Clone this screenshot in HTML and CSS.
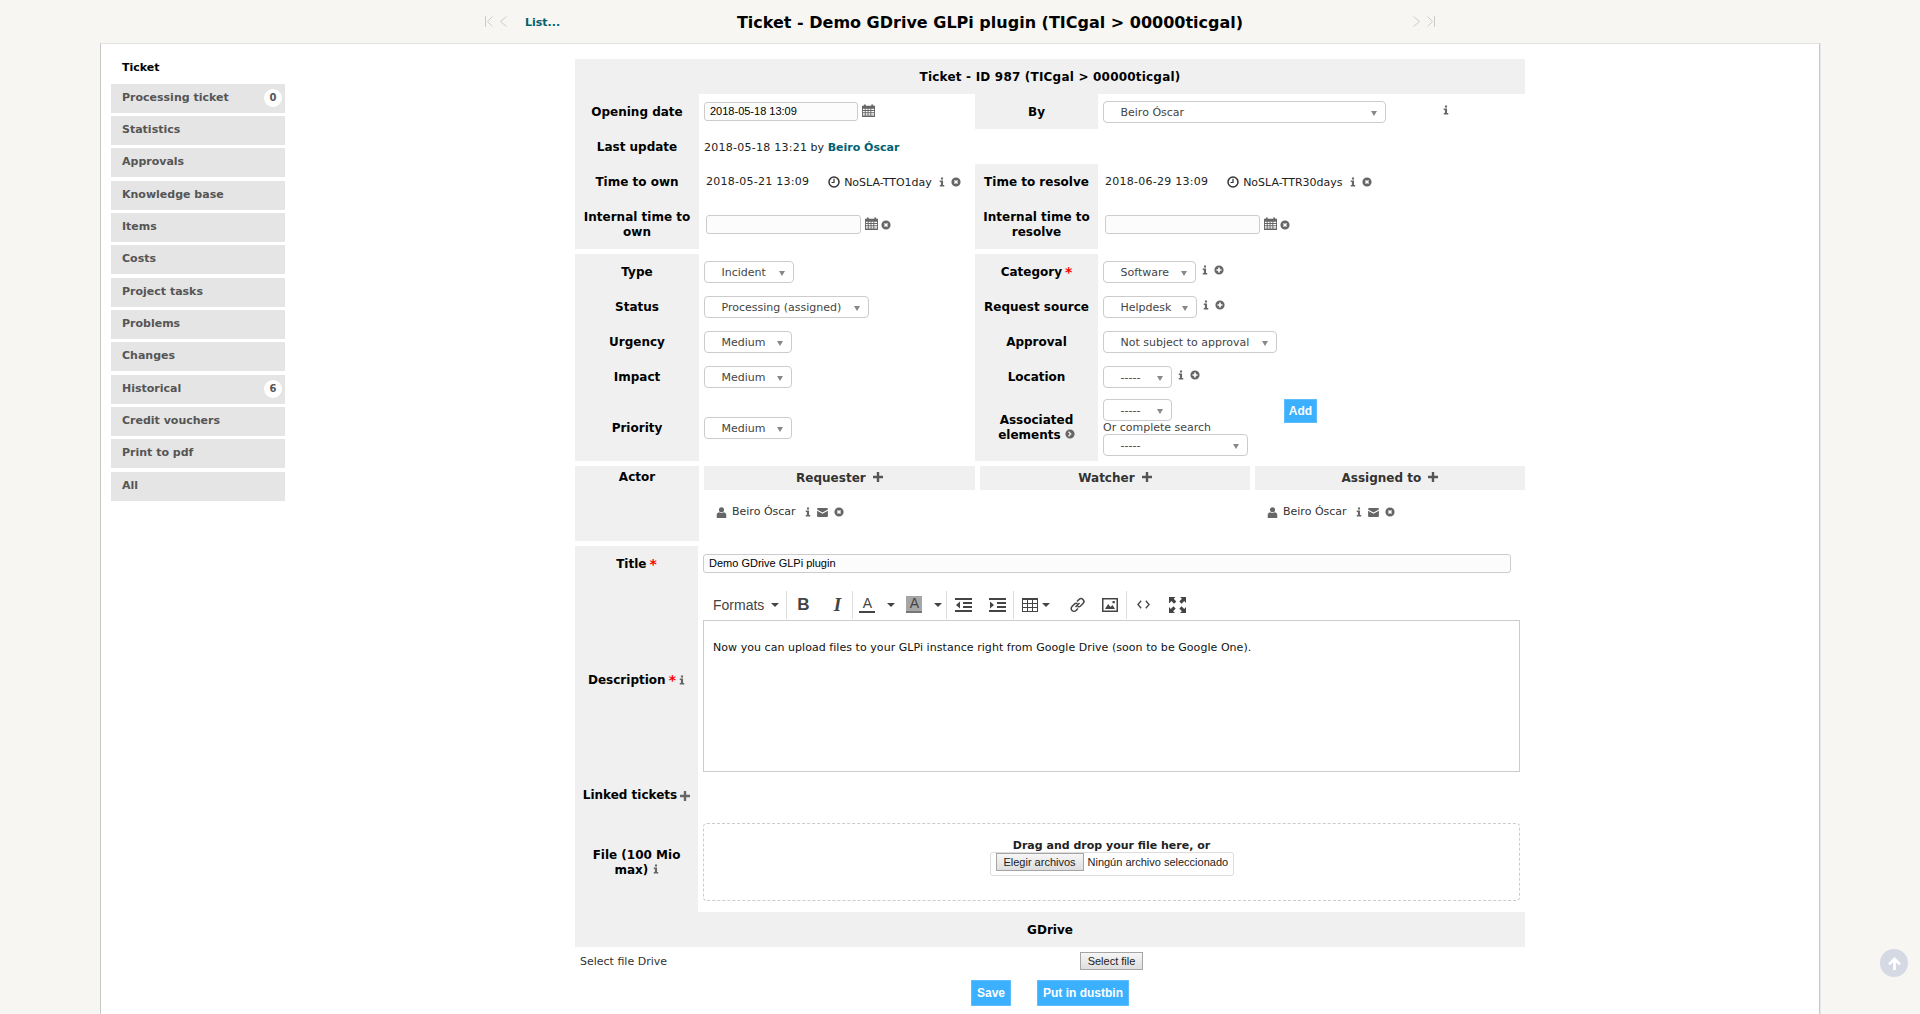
FILE: index.html
```html
<!DOCTYPE html>
<html lang="en">
<head>
    <meta charset="UTF-8">
    <title>Ticket - Demo GDrive GLPi plugin</title>
    <link rel="stylesheet" href="styles.css">
</head>
<body>
    <svg class="sprite" xmlns="http://www.w3.org/2000/svg">
        <symbol id="i-info" viewBox="0 0 8 12"><path d="M2.600 0h2.800v2.600H2.600zM1 4h4.400v6H7v2H1v-2h1.500V6H1z"/></symbol>
        <symbol id="i-del" viewBox="0 0 12 12"><path fill-rule="evenodd" d="M6 .5a5.500 5.500 0 1 0 0 11 5.500 5.500 0 0 0 0-11zM3.500 4.700l1.200-1.200L6 4.800l1.300-1.300 1.200 1.200L7.200 6l1.300 1.300-1.200 1.200L6 7.200 4.700 8.500 3.500 7.300 4.800 6z"/></symbol>
        <symbol id="i-add" viewBox="0 0 12 12"><path fill-rule="evenodd" d="M6 .5a5.500 5.500 0 1 0 0 11 5.500 5.500 0 0 0 0-11zM5 3h2v2h2v2H7v2H5V7H3V5h2z"/></symbol>
        <symbol id="i-next" viewBox="0 0 12 12"><path fill-rule="evenodd" d="M6 .5a5.500 5.500 0 1 0 0 11 5.500 5.500 0 0 0 0-11zM4.800 2.800L8 6 4.800 9.200 3.700 8l2-2-2-2z"/></symbol>
        <symbol id="i-plus" viewBox="0 0 10 10"><path d="M3.800 0h2.400v3.800H10v2.400H6.200V10H3.800V6.200H0V3.800h3.800z"/></symbol>
        <symbol id="i-cal" viewBox="0 0 14 14"><path fill-rule="evenodd" d="M0 2h2V.5h2V2h6V.5h2V2h2v12H0zM1 5v1.500h2V5zm3 0v1.500h2V5zm3 0v1.500h2V5zm3 0v1.500h3V5zM1 7.500V9h2V7.500zm3 0V9h2V7.500zm3 0V9h2V7.500zm3 0V9h3V7.500zM1 10v1.500h2V10zm3 0v1.500h2V10zm3 0v1.500h2V10zm3 0v1.500h3V10zM1 12.300V13h2v-.7zm3 0V13h2v-.7zm3 0V13h2v-.7zm3 0V13h3v-.7z"/></symbol>
        <symbol id="i-clock" viewBox="0 0 12 12"><circle cx="6" cy="6" r="5" fill="none" stroke="currentColor" stroke-width="1.500"/><path d="M6 2.800v3.700H3.500" fill="none" stroke="currentColor" stroke-width="1.200"/></symbol>
        <symbol id="i-user" viewBox="0 0 12 12"><circle cx="6" cy="3" r="2.800"/><path d="M.8 12V8.500C.8 7 2.500 6 3.500 5.800c1.500 1 3.500 1 5 0 1 .2 2.700 1.200 2.700 2.700V12z"/></symbol>
        <symbol id="i-mail" viewBox="0 0 12 10"><path d="M1 0h10a1 1 0 0 1 1 1v.6L6 5 0 1.600V1a1 1 0 0 1 1-1zM0 3l6 3.400L12 3v6a1 1 0 0 1-1 1H1a1 1 0 0 1-1-1z"/></symbol>
        <symbol id="m-outdent" viewBox="0 0 17 16"><path d="M0 1h17v2H0zM8 5h9v2H8zM8 9h9v2H8zM0 13h17v2H0zM5 4.500v7L1 8z"/></symbol>
        <symbol id="m-indent" viewBox="0 0 17 16"><path d="M0 1h17v2H0zM8 5h9v2H8zM8 9h9v2H8zM0 13h17v2H0zM1 4.500v7L5 8z"/></symbol>
        <symbol id="m-table" viewBox="0 0 16 16"><path fill-rule="evenodd" d="M0 1h16v14H0zM1 3v3h4V3zm5 0v3h4V3zm5 0v3h4V3zM1 7v3h4V7zm5 0v3h4V7zm5 0v3h4V7zM1 11v3h4v-3zm5 0v3h4v-3zm5 0v3h4v-3z"/></symbol>
        <symbol id="m-link" viewBox="0 0 16 16"><path d="M6 10l4-4M7.500 4.500l2-2a2.500 2.500 0 0 1 4 4l-2.500 2.500a2.500 2.500 0 0 1-3 .3M8.500 11.500l-2 2a2.500 2.500 0 0 1-4-4L5 7a2.500 2.500 0 0 1 3-.3" fill="none" stroke="currentColor" stroke-width="1.500"/></symbol>
        <symbol id="m-image" viewBox="0 0 16 16"><path fill-rule="evenodd" d="M0 1h16v14H0zM1.500 2.500v11h13v-11zM3 12l3.200-5 2.300 3L10.500 8 13 12zM10.500 4h2.300v2.300h-2.300z"/></symbol>
        <symbol id="m-code" viewBox="0 0 14 14"><path d="M4.500 3L1 7l3.500 4M9.500 3L13 7l-3.500 4" fill="none" stroke="currentColor" stroke-width="1.400"/></symbol>
        <symbol id="m-full" viewBox="0 0 17 16"><path d="M0 0h6.500L4.700 1.800 7.300 4.400 5 6.700 2.400 4.100.6 5.900H0zM17 0v6l-1.800-1.900-2.600 2.600-2.300-2.300 2.600-2.600L11 0zM0 16v-6l1.800 1.900 2.600-2.600 2.300 2.300-2.600 2.600L6 16zM17 16h-6l1.900-1.800-2.600-2.600 2.300-2.300 2.600 2.600L17 10z"/></symbol>
    </svg>

    <div class="top-bar">
        <div class="pager pager-left">
            <svg class="chev" viewBox="0 0 8 11"><path d="M.5 0v11M7.500 .5L2.500 5.500l5 5"/></svg>
            <svg class="chev" viewBox="0 0 8 11"><path d="M7.500 .5L1.500 5.500l6 5"/></svg>
        </div>
        <a class="list-link">List...</a>
        <div class="page-title">Ticket - Demo GDrive GLPi plugin (TICgal &gt; 00000ticgal)</div>
        <div class="pager pager-right">
            <svg class="chev" viewBox="0 0 8 11"><path d="M.5 .5l6 5-6 5"/></svg>
            <svg class="chev" viewBox="0 0 8 11"><path d="M.5 .5l5 5-5 5M7.500 0v11"/></svg>
        </div>
    </div>

    <div class="sheet">
        <ul class="tabs">
            <li class="tab-active">Ticket</li>
            <li>Processing ticket <span class="count">0</span></li>
            <li>Statistics</li>
            <li>Approvals</li>
            <li>Knowledge base</li>
            <li>Items</li>
            <li>Costs</li>
            <li>Project tasks</li>
            <li>Problems</li>
            <li>Changes</li>
            <li>Historical <span class="count">6</span></li>
            <li>Credit vouchers</li>
            <li>Print to pdf</li>
            <li>All</li>
        </ul>

        <form class="ticket">
            <div class="head-row head-ticket">Ticket - ID 987 (TICgal &gt; 00000ticgal)</div>

            <div class="block dates">
                <div class="lbl">Opening date</div>
                <div class="val">
                    <span class="input w-date">2018-05-18 13:09</span>
                    <svg class="ico cal"><use href="#i-cal"/></svg>
                </div>
                <div class="lbl">By</div>
                <div class="val val-by">
                    <span class="select w-by">Beiro Óscar</span>
                    <svg class="ico info by-info"><use href="#i-info"/></svg>
                </div>

                <div class="lbl">Last update</div>
                <div class="val val-update"><span class="stamp">2018-05-18 13:21</span>&nbsp;by&nbsp;<a class="user-link">Beiro Óscar</a></div>
                <div class="blank"></div>
                <div class="blank"></div>

                <div class="lbl">Time to own</div>
                <div class="val val-sla">
                    <span class="stamp sla-date">2018-05-21 13:09</span>
                    <svg class="ico clock"><use href="#i-clock"/></svg>
                    <span class="sla-name">NoSLA-TTO1day</span>
                    <svg class="ico info"><use href="#i-info"/></svg>
                    <svg class="ico circle"><use href="#i-del"/></svg>
                </div>
                <div class="lbl">Time to resolve</div>
                <div class="val val-sla">
                    <span class="stamp sla-date">2018-06-29 13:09</span>
                    <svg class="ico clock"><use href="#i-clock"/></svg>
                    <span class="sla-name">NoSLA-TTR30days</span>
                    <svg class="ico info"><use href="#i-info"/></svg>
                    <svg class="ico circle"><use href="#i-del"/></svg>
                </div>

                <div class="lbl">Internal time to own</div>
                <div class="val val-sla val-internal">
                    <span class="input w-date2"></span>
                    <svg class="ico cal"><use href="#i-cal"/></svg>
                    <svg class="ico circle"><use href="#i-del"/></svg>
                </div>
                <div class="lbl">Internal time to resolve</div>
                <div class="val val-sla val-internal">
                    <span class="input w-date2"></span>
                    <svg class="ico cal"><use href="#i-cal"/></svg>
                    <svg class="ico circle"><use href="#i-del"/></svg>
                </div>
            </div>

            <div class="block props">
                <div class="lbl">Type</div>
                <div class="val"><span class="select w-type">Incident</span></div>
                <div class="lbl">Category <b class="req">*</b></div>
                <div class="val">
                    <span class="select w-cat">Software</span>
                    <svg class="ico info raised"><use href="#i-info"/></svg>
                    <svg class="ico circle raised"><use href="#i-add"/></svg>
                </div>

                <div class="lbl">Status</div>
                <div class="val"><span class="select w-status">Processing (assigned)</span></div>
                <div class="lbl">Request source</div>
                <div class="val">
                    <span class="select w-source">Helpdesk</span>
                    <svg class="ico info raised"><use href="#i-info"/></svg>
                    <svg class="ico circle raised"><use href="#i-add"/></svg>
                </div>

                <div class="lbl">Urgency</div>
                <div class="val"><span class="select w-med">Medium</span></div>
                <div class="lbl">Approval</div>
                <div class="val"><span class="select w-appr">Not subject to approval</span></div>

                <div class="lbl">Impact</div>
                <div class="val"><span class="select w-med">Medium</span></div>
                <div class="lbl">Location</div>
                <div class="val">
                    <span class="select w-dash">-----</span>
                    <svg class="ico info raised"><use href="#i-info"/></svg>
                    <svg class="ico circle raised"><use href="#i-add"/></svg>
                </div>

                <div class="lbl">Priority</div>
                <div class="val"><span class="select w-med">Medium</span></div>
                <div class="lbl">
                    <span>Associated<br>elements <svg class="ico circle"><use href="#i-next"/></svg></span>
                </div>
                <div class="val assoc">
                    <div class="assoc-left">
                        <span class="select w-dash">-----</span>
                        <span class="assoc-note">Or complete search</span>
                        <span class="select w-search">-----</span>
                    </div>
                    <span class="btn btn-add">Add</span>
                </div>
            </div>

            <div class="block actors">
                <div class="lbl lbl-top">Actor</div>
                <div class="actor-col">
                    <div class="actor-head">Requester <svg class="ico plus"><use href="#i-plus"/></svg></div>
                    <div class="actor-item">
                        <svg class="ico user"><use href="#i-user"/></svg>Beiro Óscar
                        <svg class="ico info"><use href="#i-info"/></svg>
                        <svg class="ico mail"><use href="#i-mail"/></svg>
                        <svg class="ico circle"><use href="#i-del"/></svg>
                    </div>
                </div>
                <div class="actor-col">
                    <div class="actor-head">Watcher <svg class="ico plus"><use href="#i-plus"/></svg></div>
                </div>
                <div class="actor-col">
                    <div class="actor-head">Assigned to <svg class="ico plus"><use href="#i-plus"/></svg></div>
                    <div class="actor-item">
                        <svg class="ico user"><use href="#i-user"/></svg>Beiro Óscar
                        <svg class="ico info"><use href="#i-info"/></svg>
                        <svg class="ico mail"><use href="#i-mail"/></svg>
                        <svg class="ico circle"><use href="#i-del"/></svg>
                    </div>
                </div>
            </div>

            <div class="block content">
                <div class="lbl">Title <b class="req">*</b></div>
                <div class="val-wide row-title"><span class="input w-title">Demo GDrive GLPi plugin</span></div>

                <div class="lbl">Description <b class="req">*</b> <svg class="ico info"><use href="#i-info"/></svg></div>
                <div class="val-wide">
                    <div class="toolbar">
                        <span class="tb-formats">Formats<i class="caret"></i></span>
                        <span class="tb-sep"></span>
                        <span class="tb-btn tb-b">B</span>
                        <span class="tb-btn tb-i">I</span>
                        <span class="tb-sep"></span>
                        <span class="tb-color">A</span><i class="caret"></i>
                        <span class="tb-color tb-back">A</span><i class="caret caret-end"></i>
                        <span class="tb-sep"></span>
                        <svg class="tb-ico tb-outdent"><use href="#m-outdent"/></svg>
                        <svg class="tb-ico tb-indent"><use href="#m-indent"/></svg>
                        <span class="tb-sep"></span>
                        <svg class="tb-ico tb-table"><use href="#m-table"/></svg><i class="caret caret-table"></i>
                        <svg class="tb-ico tb-link"><use href="#m-link"/></svg>
                        <svg class="tb-ico tb-image"><use href="#m-image"/></svg>
                        <span class="tb-sep"></span>
                        <svg class="tb-ico tb-code"><use href="#m-code"/></svg>
                        <svg class="tb-ico tb-full"><use href="#m-full"/></svg>
                    </div>
                    <div class="editor">Now you can upload files to your GLPi instance right from Google Drive (soon to be Google One).</div>
                </div>

                <div class="lbl">Linked tickets <svg class="ico plus"><use href="#i-plus"/></svg></div>
                <div class="val-wide"></div>

                <div class="lbl"><span>File (100 Mio<br>max) <svg class="ico info"><use href="#i-info"/></svg></span></div>
                <div class="val-wide row-file">
                    <div class="dropzone">
                        <b class="drop-text">Drag and drop your file here, or</b>
                        <span class="file-box"><span class="file-btn">Elegir archivos</span>Ningún archivo seleccionado</span>
                    </div>
                </div>
            </div>

            <div class="head-row">GDrive</div>
            <div class="drive-row">
                <span class="drive-label">Select file Drive</span>
                <span class="drive-btn">Select file</span>
            </div>
            <div class="actions">
                <span class="btn">Save</span>
                <span class="btn">Put in dustbin</span>
            </div>
        </form>
    </div>

    <div class="to-top">
        <svg viewBox="0 0 14 14"><path d="M7 1l6 6-1.700 1.700L8.300 5.800V13H5.700V5.800L2.700 8.700 1 7z"/></svg>
    </div>
</body>
</html>
```

FILE: styles.css
```css
html, body {
    height: 100%;
}
body {
    margin: 0;
    overflow: hidden;
    background-color: #f7f6f2;
    color: #000;
    font-family: "DejaVu Sans", Verdana, sans-serif;
    font-size: 11px;
}
.sprite {
    display: none;
}
.top-bar {
    position: relative;
    height: 43px;
}
.pager {
    position: absolute;
    top: 16px;
    display: flex;
    gap: 6px;
}
.pager-left {
    left: 485px;
}
.pager-right {
    left: 1413px;
}
.chev {
    width: 8px;
    height: 11px;
    fill: none;
    stroke: #ccc;
    stroke-width: 1;
}
.list-link {
    position: absolute;
    left: 525px;
    top: 16px;
    font-weight: bold;
    color: #006173;
}
.page-title {
    position: absolute;
    left: 0;
    right: 0;
    padding-left: 60px;
    top: 13px;
    text-align: center;
    font-size: 16px;
    font-weight: bold;
}
.sheet {
    display: flex;
    height: calc(100% - 43px);
    box-sizing: border-box;
    margin-left: 100px;
    width: 1720px;
    padding: 15px 0 0 10px;
    background: #fff;
    border: 1px solid #c8c8c8;
    border-top-color: #e2e2e2;
    border-bottom: none;
    box-shadow: 1px 0 0 #e8e8e8;
}
.tabs {
    list-style: none;
    margin: 0;
    padding: 0;
    width: 174px;
    flex: none;
}
.tabs li {
    position: relative;
    box-sizing: border-box;
    height: 29px;
    margin-bottom: 3.33px;
    padding: 7px 11px;
    background: #e5e5e5;
    color: #555;
    font-weight: bold;
}
.tabs .tab-active {
    height: 24.6px;
    margin-bottom: 0;
    background: none;
    color: #000;
    padding-top: 2px;
}
.count {
    position: absolute;
    right: 3px;
    top: 5px;
    width: 18px;
    height: 18px;
    line-height: 18px;
    border-radius: 50%;
    background: #fff;
    text-align: center;
    font-size: 10px;
}
.ticket {
    margin-left: 290px;
    width: 950px;
    flex: none;
}
.head-row {
    height: 35px;
    line-height: 36px;
    background: #f0f0f0;
    text-align: center;
    font-size: 12px;
    font-weight: bold;
}
.head-ticket {
    letter-spacing: .2px;
}
.block {
    display: grid;
    grid-template-columns: 124px 276px 123px 427px;
    margin-bottom: 5px;
}
.lbl {
    display: flex;
    align-items: center;
    justify-content: center;
    gap: 3px;
    padding: 1px 5px 0;
    background: #f0f0f0;
    text-align: center;
    font-size: 12px;
    font-weight: bold;
    line-height: 15px;
}
.val {
    display: flex;
    align-items: center;
    padding-left: 5px;
    color: #222;
}
.val-update {
    padding-top: 1px;
}
.val-internal {
    padding-top: 1px;
}
.stamp {
    letter-spacing: .25px;
}
.dates {
    grid-template-rows: 35px 35px 35px 50px;
}
.props {
    grid-template-rows: 35px 35px 35px 35px 67px;
}
.req {
    color: #f00;
    font-size: 14px;
    line-height: 10px;
}
.input {
    display: block;
    box-sizing: border-box;
    height: 19px;
    line-height: 17px;
    padding: 0 5px;
    border: 1px solid #ccc;
    border-radius: 3px;
    background: #fcfcfc;
    font-family: "Liberation Sans", Arial, sans-serif;
    font-size: 11px;
    color: #000;
}
.w-date {
    width: 154px;
}
.w-date2 {
    width: 155px;
    margin-left: 2px;
}
.w-title {
    width: 808px;
}
.select {
    position: relative;
    display: block;
    box-sizing: border-box;
    height: 22px;
    line-height: 21px;
    padding-left: 16.5px;
    border: 1px solid #ccc;
    border-radius: 4px;
    background: #fff;
    color: #444;
    white-space: nowrap;
}
.select::after {
    content: "";
    position: absolute;
    right: 8px;
    top: 9px;
    border-style: solid;
    border-width: 5px 3px 0 3px;
    border-color: #888 transparent transparent transparent;
}
.w-by { width: 283px; }
.w-type { width: 90px; }
.w-status { width: 165px; }
.w-med { width: 88px; }
.w-cat { width: 93px; }
.w-source { width: 94px; }
.w-appr { width: 174px; }
.w-dash { width: 69px; }
.w-search { width: 145px; }
.ico {
    flex: none;
    fill: #666;
    color: #666;
}
.info {
    width: 6px;
    height: 10px;
}
.circle {
    width: 10px;
    height: 10px;
}
.plus {
    width: 10px;
    height: 10px;
}
.cal {
    width: 13px;
    height: 13px;
    margin-left: 4px;
    margin-top: -3px;
}
.clock {
    width: 12px;
    height: 12px;
    margin: 0 4px 0 19px;
    color: #333;
}
.raised {
    margin-top: -3px;
    margin-left: 6px;
}
.by-info {
    margin-left: 57px;
    margin-top: -3px;
}
.user-link {
    color: #006173;
    font-weight: bold;
}
.sla-date {
    margin: -1px 0 0 2px;
}
.sla-name {
    margin-top: 1px;
}
.val-sla .info {
    margin-left: 7px;
}
.val-sla .circle {
    margin-left: 6px;
}
.val-sla .cal + .circle {
    margin-left: 3px;
}
.assoc {
    align-items: flex-start;
}
.assoc-left {
    display: flex;
    flex-direction: column;
    width: 182px;
    padding-top: 5px;
    color: #444;
}
.assoc-note {
    line-height: 13px;
}
.btn {
    box-sizing: border-box;
    background: #3ab0ff;
    color: #fff;
    font-family: "Liberation Sans", Arial, sans-serif;
    font-size: 12px;
    font-weight: bold;
    border: 1px solid #5dbdfd;
}
.btn-add {
    width: 33px;
    height: 24px;
    line-height: 22px;
    text-align: center;
    margin: 5px 0 0 -1px;
}
.actors {
    grid-template-columns: 124px 276px 275px 275px;
    min-height: 75px;
}
.lbl-top {
    align-items: flex-start;
    padding-top: 4px;
}
.actor-col {
    padding-left: 5px;
}
.actor-head {
    height: 24px;
    line-height: 24px;
    background: #f0f0f0;
    color: #333;
    text-align: center;
    font-size: 12px;
    font-weight: bold;
}
.actor-head .plus {
    fill: #555;
    margin-left: 3px;
}
.actor-item {
    display: flex;
    align-items: center;
    padding: 15px 0 0 12px;
    color: #333;
    line-height: 14px;
}
.user {
    width: 11px;
    height: 11px;
    margin-right: 5px;
}
.actor-item .info {
    margin-left: 9px;
}
.actor-item .mail {
    width: 11px;
    height: 9px;
    margin-left: 6px;
}
.actor-item .circle {
    margin-left: 6px;
}
.content {
    grid-template-columns: 123px 827px;
    grid-template-rows: 35px 197px 34px 100px;
    margin-bottom: 0;
}
.val-wide {
    padding-left: 5px;
}
.row-title {
    padding-top: 8px;
}
.toolbar {
    display: flex;
    align-items: center;
    box-sizing: border-box;
    height: 39px;
    padding-top: 8px;
    color: #444;
}
.tb-formats {
    display: flex;
    align-items: center;
    font-family: "Liberation Sans", Arial, sans-serif;
    font-size: 14px;
    padding: 0 4px 0 10px;
    color: #444;
}
.caret {
    display: block;
    flex: none;
    margin-left: 12px;
    border-style: solid;
    border-width: 4px 4px 0 4px;
    border-color: #444 transparent transparent transparent;
}
.tb-formats .caret {
    margin-left: 7px;
}
.caret-end {
    margin-right: 1px;
}
.caret-table {
    margin-left: 4px;
}
.tb-sep {
    flex: none;
    width: 1px;
    height: 28px;
    background: #ddd;
    margin: 0 4px 0 3px;
}
.tb-btn {
    flex: none;
    width: 24px;
    text-align: center;
    line-height: 18px;
}
.tb-b {
    font-family: "Liberation Sans", Arial, sans-serif;
    font-weight: bold;
    font-size: 17px;
}
.tb-i {
    margin-left: 10px;
    font-family: "Liberation Serif", serif;
    font-style: italic;
    font-weight: bold;
    font-size: 19px;
}
.tb-color {
    flex: none;
    box-sizing: border-box;
    width: 16px;
    height: 17px;
    margin-left: 2px;
    text-align: center;
    font-family: "Liberation Sans", Arial, sans-serif;
    font-size: 14px;
    line-height: 15px;
    border-bottom: 2px solid #444;
}
.tb-back {
    margin-left: 11px;
    background: #a6a6a6;
    border-bottom-color: #777;
}
.tb-ico {
    flex: none;
    width: 17px;
    height: 16px;
    fill: #444;
    color: #444;
}
.tb-outdent {
    margin-left: 4px;
}
.tb-indent {
    margin: 0 4px 0 17px;
}
.tb-table {
    width: 16px;
    margin-left: 4px;
}
.tb-link {
    margin-left: 19px;
}
.tb-image {
    width: 16px;
    margin: 0 5px 0 16px;
}
.tb-code {
    width: 13px;
    height: 13px;
    margin-left: 6px;
}
.tb-full {
    margin-left: 19px;
}
.editor {
    box-sizing: border-box;
    width: 817px;
    height: 152px;
    padding: 20px 9px;
    border: 1px solid #ccc;
    font-size: 11px;
    line-height: 13px;
    letter-spacing: .05px;
    color: #111;
}
.row-file {
    padding-top: 11px;
}
.dropzone {
    box-sizing: border-box;
    display: flex;
    flex-direction: column;
    align-items: center;
    width: 817px;
    height: 78px;
    padding-top: 15px;
    border: 1px dashed #ccc;
    border-radius: 4px;
}
.drop-text {
    line-height: 13px;
    color: #222;
}
.file-box {
    display: flex;
    align-items: flex-start;
    box-sizing: border-box;
    height: 24px;
    width: 244px;
    padding-left: 5px;
    gap: 4px;
    border: 1px solid #ddd;
    border-radius: 3px;
    font-family: "Liberation Sans", Arial, sans-serif;
    font-size: 11px;
    line-height: 18px;
    color: #222;
    white-space: nowrap;
}
.file-btn, .drive-btn {
    box-sizing: border-box;
    border: 1px solid #a5a5a5;
    background: linear-gradient(#f6f6f6, #dedede);
    font-family: "Liberation Sans", Arial, sans-serif;
    font-size: 11px;
    color: #222;
    text-align: center;
}
.file-btn {
    width: 88px;
    height: 18px;
    line-height: 16px;
}
.drive-row {
    display: flex;
    align-items: center;
    box-sizing: border-box;
    height: 33px;
    padding: 0 0 5px 5px;
    color: #333;
}
.drive-btn {
    width: 63px;
    height: 18px;
    line-height: 16px;
    margin-left: 413px;
}
.actions {
    display: flex;
    justify-content: center;
    gap: 26px;
}
.actions .btn {
    height: 26px;
    line-height: 24px;
    padding: 0 5px;
}
.to-top {
    position: fixed;
    left: 1880px;
    top: 949px;
    display: flex;
    align-items: center;
    justify-content: center;
    width: 28px;
    height: 28px;
    border-radius: 50%;
    background: #d4d9e4;
}
.to-top svg {
    width: 15px;
    height: 15px;
    fill: #fff;
}
```
